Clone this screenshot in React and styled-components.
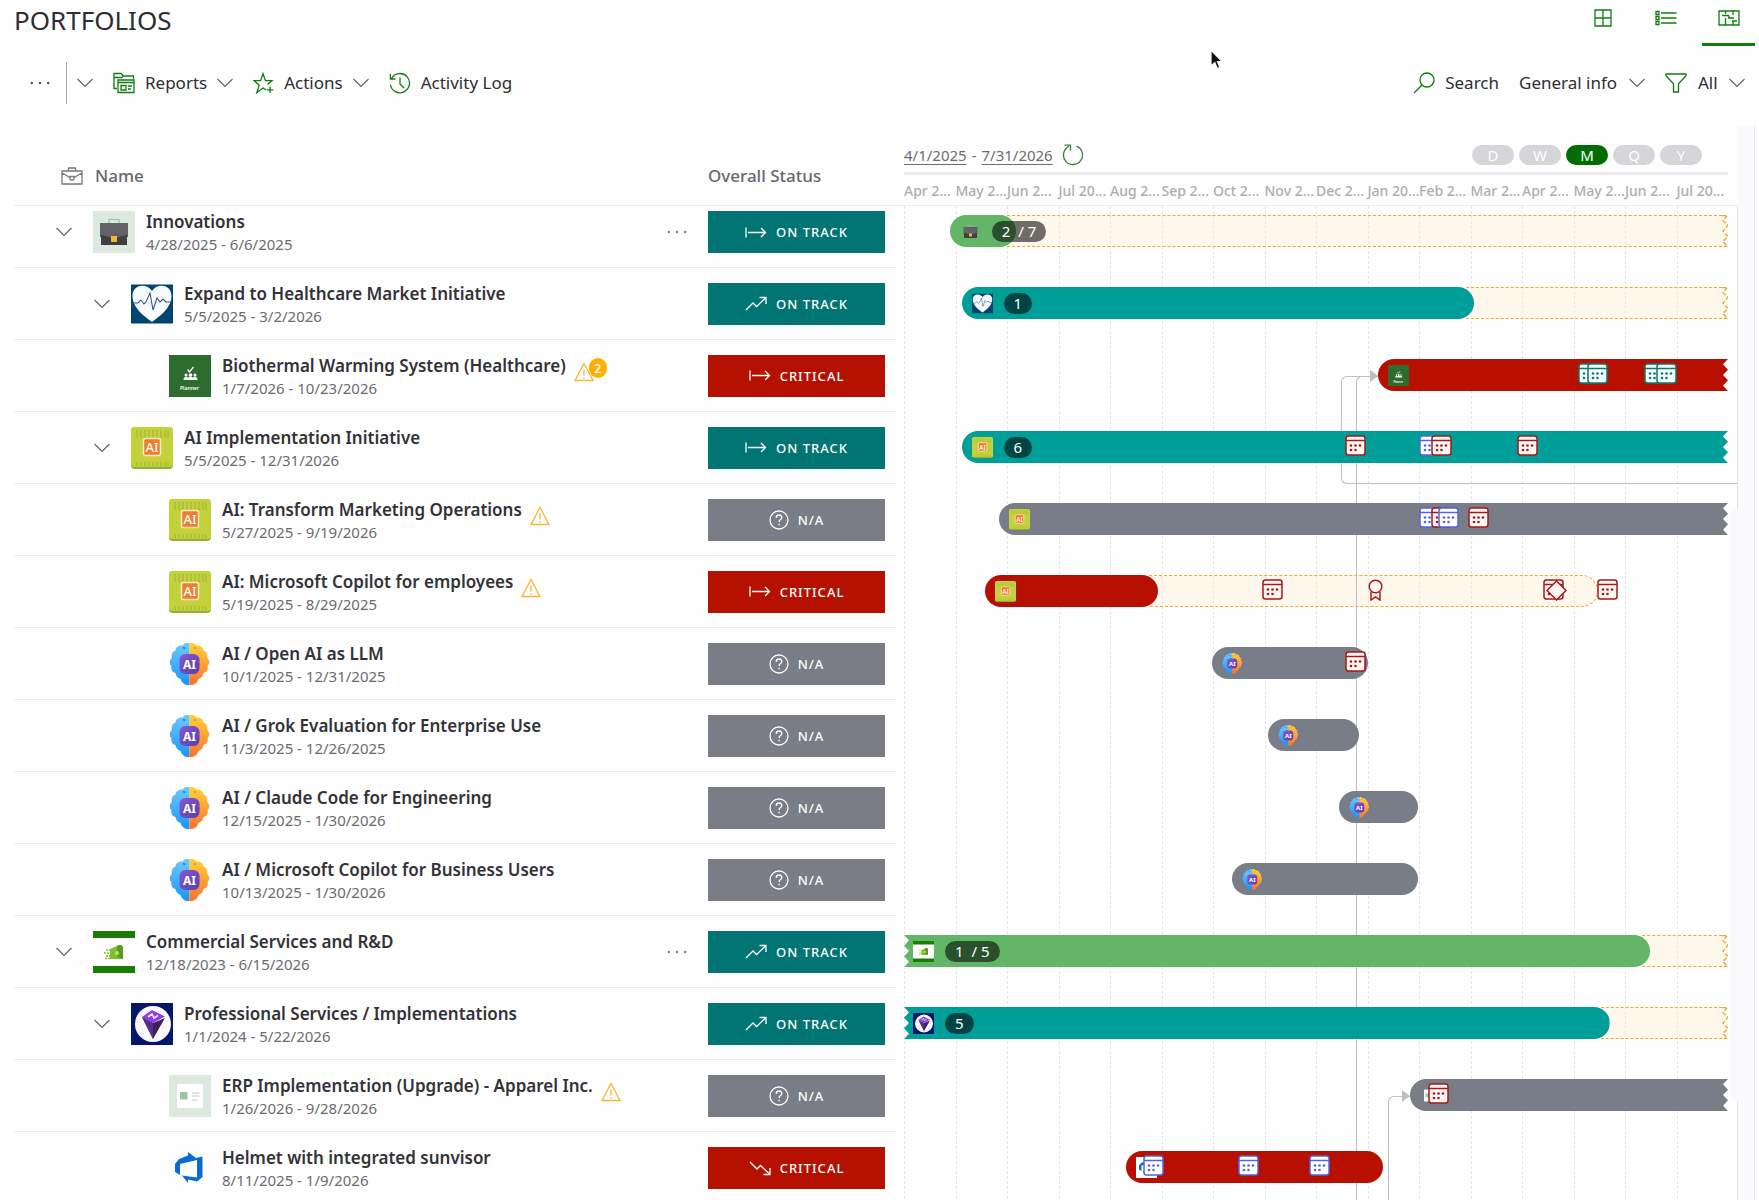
import React, { useId } from "react";
import styled, { createGlobalStyle, css } from "styled-components";

/* ---------- data ---------- */

const TOTAL_DAYS = 487; // 4/1/2025 – 7/31/2026
const pct = (day) => `${(day / TOTAL_DAYS) * 100}%`;

const MONTHS = [
  "Apr 2...", "May 2...", "Jun 2...", "Jul 20...", "Aug 2...", "Sep 2...", "Oct 2...", "Nov 2...",
  "Dec 2...", "Jan 20...", "Feb 2...", "Mar 2...", "Apr 2...", "May 2...", "Jun 2...", "Jul 20...",
];

const COLORS = { green: "#62b666", teal: "#009e98", red: "#b70f00", gray: "#797d87" };
const STATUS = {
  flat: { label: "ON TRACK", color: "#007574", icon: "flat" },
  up: { label: "ON TRACK", color: "#007574", icon: "up" },
  critical: { label: "CRITICAL", color: "#b51000", icon: "flat" },
  falling: { label: "CRITICAL", color: "#b51000", icon: "down" },
  na: { label: "N/A", color: "#7a7d86", icon: "help" },
};

const ROWS = [
  { level: 0, art: "case", name: "Innovations", dates: "4/28/2025 - 6/6/2025", status: "flat", open: true, more: true,
    bar: { from: 27, to: 66, color: "green", count: ["2", "/ 7"] }, plan: { to: 487, torn: true } },
  { level: 1, art: "heart", name: "Expand to Healthcare Market Initiative", dates: "5/5/2025 - 3/2/2026", status: "up", open: true,
    bar: { from: 34, to: 337, color: "teal", count: ["1"] }, plan: { to: 487, torn: true } },
  { level: 2, art: "planner", name: "Biothermal Warming System (Healthcare)", dates: "1/7/2026 - 10/23/2026", status: "critical", warn: 2,
    bar: { from: 280, to: 487, color: "red", tornRight: true },
    marks: [[405, "teal"], [410, "teal"], [444, "teal"], [451, "teal"]] },
  { level: 1, art: "chip", name: "AI Implementation Initiative", dates: "5/5/2025 - 12/31/2026", status: "flat", open: true,
    bar: { from: 34, to: 487, color: "teal", count: ["6"], tornRight: true },
    marks: [[267, "red"], [311, "blue"], [318, "red"], [369, "red"]] },
  { level: 2, art: "chip", name: "AI: Transform Marketing Operations", dates: "5/27/2025 - 9/19/2026", status: "na", warn: 1,
    bar: { from: 56, to: 487, color: "gray", tornRight: true },
    marks: [[311, "blue"], [318, "red"], [322, "blue"], [340, "red"]] },
  { level: 2, art: "chip", name: "AI: Microsoft Copilot for employees", dates: "5/19/2025 - 8/29/2025", status: "critical", warn: 1,
    bar: { from: 48, to: 150, color: "red" }, plan: { to: 410 },
    marks: [[218, "red"], [279, "red", "ribbon"], [384, "red"], [386, "red", "diamond"], [416, "red"]] },
  { level: 2, art: "brain", name: "AI / Open AI as LLM", dates: "10/1/2025 - 12/31/2025", status: "na",
    bar: { from: 182, to: 274, color: "gray" }, marks: [[267, "red"]] },
  { level: 2, art: "brain", name: "AI / Grok Evaluation for Enterprise Use", dates: "11/3/2025 - 12/26/2025", status: "na",
    bar: { from: 215, to: 269, color: "gray" } },
  { level: 2, art: "brain", name: "AI / Claude Code for Engineering", dates: "12/15/2025 - 1/30/2026", status: "na",
    bar: { from: 257, to: 304, color: "gray" } },
  { level: 2, art: "brain", name: "AI / Microsoft Copilot for Business Users", dates: "10/13/2025 - 1/30/2026", status: "na",
    bar: { from: 194, to: 304, color: "gray" } },
  { level: 0, art: "money", name: "Commercial Services and R&D", dates: "12/18/2023 - 6/15/2026", status: "up", open: true, more: true,
    bar: { from: 0, to: 441, color: "green", count: ["1", "/ 5"], tornLeft: true }, plan: { to: 487, torn: true } },
  { level: 1, art: "gem", name: "Professional Services / Implementations", dates: "1/1/2024 - 5/22/2026", status: "up", open: true,
    bar: { from: 0, to: 417, color: "teal", count: ["5"], tornLeft: true }, plan: { to: 487, torn: true } },
  { level: 2, art: "card", name: "ERP Implementation (Upgrade) - Apparel Inc.", dates: "1/26/2026 - 9/28/2026", status: "na", warn: 1,
    bar: { from: 299, to: 487, color: "gray", tornRight: true }, marks: [[316, "red"]] },
  { level: 2, art: "devops", name: "Helmet with integrated sunvisor", dates: "8/11/2025 - 1/9/2026", status: "falling",
    bar: { from: 131, to: 283, color: "red" },
    marks: [[148, "blue"], [204, "blue"], [246, "blue"]] },
];

/* ---------- global ---------- */

const Global = createGlobalStyle`
  *, *::before, *::after { box-sizing: border-box; }
  body { margin: 0; background: #fefefe; color: #2e2d33; font: 400 17px/24px "Noto Sans", "Open Sans", sans-serif; }
  button, select { font: inherit; color: inherit; background: none; border: 0; padding: 0; margin: 0; cursor: pointer; }
  svg { display: block; flex: none; }
`;

/* ---------- line icons ---------- */

const Line = ({ w, h = w, color = "#107c10", sw = 1.3, children }) => (
  <svg width={w} height={h} viewBox={`0 0 ${w} ${h}`} fill="none" stroke={color} strokeWidth={sw} aria-hidden="true">
    {children}
  </svg>
);

const Chevron = () => <Line w={16} h={10} color="#5d5c62" sw={1.1}><path d="M.5 1L8 8.500 15.500 1" /></Line>;
const Dots = ({ color = "#55545a" }) => (
  <svg width="20" height="4" viewBox="0 0 20 4" fill={color} aria-hidden="true">
    <circle cx="1.800" cy="2" r="1.300" /><circle cx="10" cy="2" r="1.300" /><circle cx="18.200" cy="2" r="1.300" />
  </svg>
);
const ReportsIcon = () => (
  <Line w={22}>
    <path d="M4 16.500H1V1.500h7l2.500 2.500H20.500V7M1 5.500h7.500l2-1.500" />
    <path d="M5 20.500V8h16v12.500zM5 10.500H21M8 13.500h5v4.500H8zM15 14h4M15 17h3" />
  </Line>
);
const StarIcon = () => (
  <Line w={21} h={22}>
    <path d="M13 18l-3-2-6.200 4.600 2.400-7.300L1 8.600h6.600L10 1.700l2.400 6.900H19l-4.500 4" />
    <path d="M17 14.500v6.500M13.800 17.800h6.500" />
  </Line>
);
const HistoryIcon = () => (
  <Line w={22}>
    <path d="M2.600 6.300A9.600 9.600 0 1 1 1.400 12.500M1.400 2v5h5M11 5.500V12l4 4" />
  </Line>
);
const SearchIcon = () => <Line w={22}><circle cx="14" cy="8" r="7" /><path d="M9 13l-8 8" /></Line>;
const FilterIcon = () => <Line w={22} h={20}><path d="M1 1h20v1.800l-7.500 8V19h-5v-8.200L1 2.800z" /></Line>;
const TilesIcon = () => <Line w={18}><path d="M1 1h16v16H1zM9 1v16M1 9h16" /></Line>;
const ListIcon = () => (
  <Line w={22} h={16}>
    <path d="M1 1.500h3v3H1zM1 6.500h3v3H1zM1 11.500h3v3H1zM6 3h15.500M6 8h15.500M6 13h15.500" />
  </Line>
);
const BoardIcon = () => (
  <Line w={22} h={16}>
    <path d="M1 1h20v14H1zM7.500 1v3M4 5.500h7M15 1v4M10 8h6M14 11h5M7.500 8v7M11 5.500v2.500M15 11v4" />
  </Line>
);
const BriefcaseIcon = () => (
  <Line w={22} h={18} color="#77757b">
    <path d="M1 4h20v13H1zM7.500 4V1h7v3M1 6l8 4.500M21 6l-8 4.500M9 9.500h4v2.500l-1 1h-2l-1-1z" />
  </Line>
);
const RefreshIcon = () => (
  <Line w={22} color="#2f8438"><path d="M14.500 2.200a9.500 9.500 0 1 1-7.500.2M2.500 1.200h6v5.500" /></Line>
);
const WarnIcon = () => (
  <Line w={20} color="#f5b731"><path d="M10 1.500L19 18.500H1z" /><path d="M10 7.500v6M10 15v1.500" /></Line>
);

const STATUS_ICONS = {
  flat: <path d="M1 1.500v10M3 6.500h17.500M16 2l4.500 4.500L16 11" />,
  up: <path d="M1 14l7-7 3.500 3.500L20.500 2M14.500 1.500H21V8" />,
  down: <path d="M1 2l7 7 3.500-3.500L20.500 14M14.500 14.500H21V8" />,
  help: (
    <>
      <circle cx="10" cy="10" r="9" />
      <path d="M7.200 8c0-4 5.600-3.800 5.600-.5 0 2-2.800 2.200-2.800 4.500M10 13.500V15.200" />
    </>
  ),
};
const STATUS_SIZE = { flat: [22, 13], up: [22, 16], down: [22, 16], help: [20, 20] };

/* ---------- project pictures ---------- */

function Art({ kind, size = 42, bare = false }) {
  const id = useId();
  const body = {
    case: (
      <>
        {!bare && <path fill="#dbe9de" d="M0 0h42v42H0z" />}
        <path fill="none" stroke="#a9b3ac" strokeWidth="1.200" d="M16 12V8.500h10V12" />
        <path fill="#636266" d="M7 12h28v14H7z" /><path fill="#3f3e42" d="M8 24l13 3 13-3v10H8z" />
        <path fill="#f0b63a" d="M18 25h6v6h-6z" />
      </>
    ),
    heart: (
      <>
        <path fill="#004471" d="M0 1.500h42v39H0z" />
        <path fill="#f7fafe" d="M21 39C16 35 1.500 26 1.500 13 1.500 1 16 0 21 8c5-8 19.500-7 19.500 5C40.500 26 26 35 21 39z" />
        <path fill="none" stroke="#315a7c" strokeWidth="1.100" d="M1 20h6l3-3 3 4 2-2 4-9 3 17 4-12 3 4 3-3 3 3h6" />
      </>
    ),
    planner: (
      <>
        <path fill="#2c6c2f" d="M0 0h42v42H0z" />
        <path fill="none" stroke="#fff" strokeWidth="1.300" d="M18.500 14.500l2 2.500 4-5" />
        <g fill="#fff">
          <circle cx="17" cy="20" r="1.500" /><circle cx="21.500" cy="20" r="1.800" /><circle cx="26" cy="20" r="1.500" />
          <path d="M14.500 25c0-4 4-4 4.500-2 1-2 4-2 5 0 .5-2 4.500-2 4.500 2z" />
        </g>
        <text x="20.500" y="35" fill="#fff" fontSize="5" fontWeight="600" textAnchor="middle">Planner</text>
      </>
    ),
    chip: (
      <>
        <rect y="1" width="42" height="41" rx="4" fill="#94ab2c" />
        <rect width="42" height="40" rx="3" fill="#c3d23a" />
        <path stroke="#a5b83a" strokeWidth="1.200" strokeDasharray="8 24" d="M6 3v38M10 3v38M14 3v38M18 3v38M22 3v38M26 3v38M30 3v38M34 3v38M37 3v38" />
        <rect x="12.500" y="11.500" width="17" height="17" rx="2" fill="#ef7d2b" stroke="#fbe7c4" strokeWidth="1.500" />
        <text x="21" y="25" fill="#fff" fontSize="13" fontWeight="500" textAnchor="middle">AI</text>
      </>
    ),
    brain: (
      <>
        <defs>
          <linearGradient id={`${id}l`} x1="0" y1="0" x2="0" y2="1"><stop offset="0" stopColor="#6ccbfb" /><stop offset="1" stopColor="#1a93f8" /></linearGradient>
          <linearGradient id={`${id}r`} x1="0" y1="0" x2="0" y2="1"><stop offset="0" stopColor="#ffd23a" /><stop offset="1" stopColor="#fb7030" /></linearGradient>
          <linearGradient id={`${id}c`} x1="0" y1="0" x2="1" y2="1"><stop offset="0" stopColor="#8a56cf" /><stop offset="1" stopColor="#5640ae" /></linearGradient>
        </defs>
        <path fill={`url(#${id}l)`} d="M20.500 0c-4-.5-6 1-7 2.500-4-.5-7 2-7 5-3 1-4.500 4-3.500 7-3 3-3 6.500-.5 8.500-1 3.500.5 6 4 7 .5 3 2 5 5 6 1.500 4.500 5 6.500 9 6z" />
        <path fill={`url(#${id}r)`} d="M20.500 0c4-.5 6 1 7 2.500 4-.5 7 2 7 5 3 1 4.500 4 3.500 7 3 3 3 6.500.5 8.500 1 3.500-.5 6-4 7-.5 3-2 5-5 6-1.500 4.500-5 6.500-9 6z" />
        <circle cx="15" cy="5" r="1.200" fill="#2a86d8" /><circle cx="26" cy="5" r="1.200" fill="#e79a1c" />
        <rect x="10.500" y="11" width="20" height="20" rx="6" fill={`url(#${id}c)`} />
        <text x="20.500" y="25.500" fill="#fff" fontSize="12" fontWeight="700" textAnchor="middle">AI</text>
      </>
    ),
    money: (
      <>
        <path fill="#fff" d="M0 0h42v42H0z" />
        <path fill="#1b7d04" d="M0 0h42v7H0zM0 35h42v7H0z" />
        <path fill="#7fbf2e" d="M17 18l7-3c2-2 5-1 6 1v12H17z" />
        <path fill="#5a9c22" d="M24 15c2-2 5-1 6 1v12l-6-2z" />
        <path stroke="#7fbf2e" strokeWidth="1.300" strokeDasharray="2 1" d="M13 19h5M11 22h6M13 25h5M12 27.500h6" />
        <circle cx="24" cy="22" r="2" fill="#b9e26b" />
      </>
    ),
    gem: (
      <>
        <path fill="#04176a" d="M0 0h42v42H0z" /><circle cx="22" cy="21" r="18" fill="#fbf9ff" />
        <path fill="#3d2260" d="M11 14l11 6 12-5-12 21z" /><path fill="#55308a" d="M11 14l11 6v16z" />
        <path fill="#8b3fe0" d="M11 14L21 7l13 6.500L22 20z" />
        <path fill="none" stroke="#f1e4ff" strokeWidth="1.600" d="M17 14l4-3 2 4 4-2.500" />
      </>
    ),
    card: (
      <>
        {!bare && <path fill="#dbe9de" d="M0 0h42v42H0z" />}
        <rect x="8" y="9" width="26" height="24" rx="1.500" fill="#fff" />
        <path fill="#9cc6a3" d="M11 17h7.500v7.500H11z" />
        <path stroke="#b9cfbd" strokeWidth="1.200" d="M23 18h7.500M23 21h7.500M23 25h5" />
      </>
    ),
    devops: (
      <>
        {bare && <path fill="#fff" d="M0 0h42v42H0z" />}
        <path fill="#0a6bd6" d="M6 17l4-5 9-3.500V5l8 6 6.500-1.500V30L28 34.500l-9-2V36l-6-7.500L28 30.500V13L11 17v11l-5-3z" />
      </>
    ),
  }[kind];
  return <svg width={size} height={size} viewBox="0 0 42 42" aria-hidden="true">{body}</svg>;
}

const MARK = {
  red: ["#a11a1c", "#fff6f1"],
  blue: ["#5066e0", "#ffffff"],
  teal: ["#14756c", "#f3fffd"],
};
function MarkIcon({ tone, shape = "calendar" }) {
  const [stroke, fill] = MARK[tone];
  return (
    <svg width="21" height="22" viewBox="0 0 21 22" stroke={stroke} fill={fill} strokeWidth="1.500" aria-hidden="true">
      {shape === "calendar" && (
        <>
          <rect x="1" y="1" width="19" height="19" rx="2.500" /><path d="M1 5.500h19" />
          <g fill={stroke} stroke="none">
            <circle cx="6" cy="10.500" r="1.300" /><circle cx="10.500" cy="10.500" r="1.300" /><circle cx="15" cy="10.500" r="1.300" />
            <circle cx="6" cy="15" r="1.300" /><circle cx="10.500" cy="15" r="1.300" />
          </g>
        </>
      )}
      {shape === "ribbon" && (
        <><path d="M6 13v8l4.500-3 4.500 3v-8" /><circle cx="10.500" cy="7.500" r="6.300" /></>
      )}
      {shape === "diamond" && <path d="M10.500 2L20 11.500 10.500 21 1 11.500z" />}
    </svg>
  );
}

/* ---------- page chrome ---------- */

const Page = styled.div`
  display: flex; flex-direction: column; height: 100vh; overflow: hidden; position: relative;
`;
const TopBar = styled.header`
  display: flex; justify-content: space-between; height: 46px; padding: 0 4px 0 14px; flex: none;
`;
const Title = styled.h1`
  margin: 0; font-size: 26px; line-height: 40px; font-weight: 400;
`;
const Views = styled.nav`display: flex; gap: 10px;`;
const ViewButton = styled.button`
  display: flex; align-items: center; justify-content: center; width: 53px; height: 46px; padding-bottom: 8px;
  border-bottom: 3px solid ${(p) => (p.$active ? "#107c10" : "transparent")};
`;
const Toolbar = styled.div`
  display: flex; align-items: center; justify-content: space-between; height: 42px; margin-top: 16px;
  padding: 0 14px 0 30px; flex: none;
`;
const ToolGroup = styled.div`display: flex; align-items: center; gap: 20px;`;
const Tool = styled.button`display: flex; align-items: center; gap: 10px; height: 42px;`;
const MoreMenu = styled.div`
  display: flex; align-items: center; gap: 10px;
  & > button:first-child { padding-right: 6px; }
`;
const Divider = styled.span`width: 1px; height: 42px; background: #a9a8ad;`;
const Picker = styled.label`
  display: flex; align-items: center; gap: 11px; height: 42px;
  & > svg:last-child { margin-left: -27px; pointer-events: none; }
`;
const Select = styled.select`appearance: none; outline: none; padding-right: 27px;`;
const Pointer = styled.svg`position: absolute; left: 1209px; top: 48px; pointer-events: none;`;

const Main = styled.main`
  display: grid; grid-template-columns: 882fr 859fr; margin-top: 22px; padding: 0 4px 0 14px; flex: 1; min-height: 0;
`;

/* ---------- project table ---------- */

const Table = styled.table`
  width: 100%; border-collapse: separate; border-spacing: 0; table-layout: fixed; align-self: start;
`;
const Th = styled.th`
  height: 80px; padding: 20px 0 0; text-align: left; font-weight: 500; color: #69676e; width: ${(p) => p.$w || "auto"};
  border-bottom: 1px solid #ebeaed;
`;
const HeadLabel = styled.div`display: flex; align-items: center; gap: 12px; padding-left: ${(p) => p.$pad || 0}px;`;
const Tr = styled.tr`
  & > td { height: 72px; padding: 0; border-bottom: 1px solid #ebeaed; }
  &:first-child > td { height: 62px; padding-bottom: 9px; }
`;
const NameCell = styled.div`
  display: flex; align-items: center; padding-left: ${(p) => 42 + 38 * p.$level}px; padding-right: 21px;
`;
const Toggle = styled.button`display: flex; align-items: center; width: 16px; height: 24px; margin-right: 21px;`;
const ToggleSpace = styled.span`width: 16px; margin-right: 21px;`;
const Labels = styled.div`flex: 1; min-width: 0; margin-left: 11px; padding-top: 2px;`;
const NameLine = styled.div`
  display: flex; align-items: center; gap: 8px; height: 22px; white-space: nowrap;
`;
const Name = styled.span`font-size: 17px; line-height: 22px; font-weight: 600; color: #333238;`;
const Dates = styled.div`font-size: 15px; line-height: 22px; color: #6d6b72;`;
const Warn = styled.span`display: flex; align-items: center; height: 22px; padding-top: 12px;`;
const WarnCount = styled.span`
  width: 18px; height: 20px; border-radius: 10px; margin: -8px 0 0 -5px; background: #ffb000; color: #fff;
  font-size: 13px; line-height: 20px; font-weight: 500; text-align: center;
`;
const Badge = styled.div`
  display: flex; align-items: center; justify-content: center; gap: 9px; height: 42px; margin-right: 11px;
  background: ${(p) => p.$color}; color: #fff; font-size: 13px; font-weight: 500; letter-spacing: 1px;
`;

/* ---------- timeline ---------- */

const ChartPanel = styled.section`display: flex; min-width: 0; min-height: 0;`;
const Timeline = styled.div`flex: 1; min-width: 0; display: flex; flex-direction: column;`;
const Rail = styled.div`
  width: 17px; background: #faf9fc; border-right: 1px solid #e9e8ec; display: flex; flex-direction: column; flex: none;
`;
const RailThumb = styled.div`
  width: 23px; height: 592px; margin: 383px 0 0 -7px; background: #faf9fc; z-index: 3;
`;
const ChartHead = styled.div`height: 80px; padding: 0 10px 0 8px; border-bottom: 1px solid #ebeaed; flex: none;`;
const RangeRow = styled.div`
  display: flex; align-items: center; justify-content: space-between; height: 49px; padding: 12px 26px 0 0;
  border-bottom: 3px solid #ebeaed;
`;
const Range = styled.div`display: flex; align-items: center; gap: 5px; font-size: 15px; color: #6d6b72; line-height: 22px;`;
const DateButton = styled.button`text-decoration: underline; text-underline-offset: 3px;`;
const RefreshButton = styled.button`margin-left: 4px;`;
const Scales = styled.div`display: flex; gap: 5px;`;
const Scale = styled.button`
  width: 42px; height: 20px; border-radius: 10px; font-size: 15px; line-height: 20px; color: #fff;
  background: ${(p) => (p.$active ? "#006d00" : "#d6d5d9")};
`;
const Months = styled.div`
  display: grid; grid-template-columns: repeat(16, minmax(0, 1fr)); font-size: 14px; font-weight: 500; line-height: 32px;
  color: #aeacb1; white-space: nowrap;
`;
const ChartBody = styled.div`
  flex: 1; min-height: 0; padding: 0 9px 0 8px; border-right: 1px solid #e4e3e8; overflow: hidden;
`;
const Canvas = styled.div`position: relative;`;
const GridLines = styled.div`
  position: absolute; inset: 0; display: grid; grid-template-columns: repeat(16, 1fr);
  & > i { border-left: 1px dashed #e7e5ea; }
`;
const Lane = styled.div`
  height: 72px; padding-bottom: 2px; display: flex; align-items: center;
  &:nth-child(2) { height: 62px; padding-bottom: 12px; }
`;
const Track = styled.div`position: relative; flex: 1; height: 32px;`;

const LEFT_TEETH = "0 100%, 5px 83.3%, 0 66.6%, 5px 50%, 0 33.3%, 5px 16.6%, 0 0";
const RIGHT_TEETH =
  "100% 0, calc(100% - 5px) 16.6%, 100% 33.3%, calc(100% - 5px) 50%, 100% 66.6%, calc(100% - 5px) 83.3%, 100% 100%";

const Bar = styled.div`
  position: absolute; top: 0; height: 32px; z-index: 1; display: flex; align-items: center; gap: 11px;
  padding-left: ${(p) => (p.$tornLeft ? 9 : 10)}px;
  background: ${(p) => COLORS[p.$color]};
  border-radius: ${(p) => (p.$tornLeft ? "0 16px 16px 0" : p.$tornRight ? "16px 0 0 16px" : "16px")};
  ${(p) => p.$tornLeft && css`clip-path: polygon(0 0, 100% 0, 100% 100%, ${LEFT_TEETH});`}
  ${(p) => p.$tornRight && css`clip-path: polygon(0 0, ${RIGHT_TEETH}, 0 100%);`}
`;
const Count = styled.span`
  display: flex; align-items: center; justify-content: center; gap: 8px; flex: none; height: 21px; padding: 0 10px;
  border-radius: 11px; background: rgba(0, 0, 0, 0.56); color: #fff; font-size: 15px; line-height: 21px; white-space: nowrap;
`;
const Plan = styled.div`position: absolute; top: 0; height: 32px; display: flex;`;
const PlanFill = styled.div`
  flex: 1; background: rgba(255, 236, 200, 0.32); border: 1px dashed #e9ab33; border-left: 0;
  ${(p) => (p.$torn ? "border-right: 0;" : "border-radius: 0 16px 16px 0;")}
`;
const Mark = styled.span`position: absolute; top: 4px; margin-left: -11px; z-index: 2;`;
const Link = styled.div`
  position: absolute; border: 0 solid #bfbec3; border-left-width: 1px; border-top-width: 1px; border-top-left-radius: 6px;
  ${(p) => p.$tail && css`border-bottom-width: 1px; border-bottom-left-radius: 6px;`}
`;
const ArrowHead = styled.i`
  position: absolute; margin: -6px 0 0 -8px; border: solid transparent; border-width: 6px 0 6px 8px; border-left-color: #bfbec3;
`;

/* y of the middle of a lane, from the top of the canvas */
const laneY = (i) => 26 + 72 * i;

/* A tail runs on from the foot of the connector to the right edge of the chart. */
function Connector({ from, to, row, height, tail }) {
  const head = `${((to - from) / (TOTAL_DAYS - from)) * 100}%`;
  const box = tail
    ? {
        width: `calc(${pct(TOTAL_DAYS - from)} + 9px)`,
        clipPath: `polygon(0 0, ${head} 0, ${head} 50%, 100% 50%, 100% 100%, 0 100%)`,
      }
    : { width: pct(to - from) };
  return (
    <>
      <Link $tail={tail} style={{ left: pct(from), top: laneY(row), height, ...box }} />
      <ArrowHead style={{ left: pct(to), top: laneY(row) }} />
    </>
  );
}

function ProjectRow({ row }) {
  const status = STATUS[row.status];
  const [w, h] = STATUS_SIZE[status.icon];
  return (
    <Tr>
      <td>
        <NameCell $level={row.level}>
          {row.open ? <Toggle aria-label={`Collapse ${row.name}`}><Chevron /></Toggle> : <ToggleSpace />}
          <Art kind={row.art} />
          <Labels>
            <NameLine>
              <Name>{row.name}</Name>
              {row.warn && (
                <Warn>
                  <WarnIcon />
                  {row.warn > 1 && <WarnCount>{row.warn}</WarnCount>}
                </Warn>
              )}
            </NameLine>
            <Dates>{row.dates}</Dates>
          </Labels>
          {row.more && <button aria-label={`More for ${row.name}`}><Dots color="#84828a" /></button>}
        </NameCell>
      </td>
      <td>
        <Badge $color={status.color}>
          <Line w={w} h={h} color="#fff">{STATUS_ICONS[status.icon]}</Line>
          {status.label}
        </Badge>
      </td>
    </Tr>
  );
}

function TimelineRow({ row }) {
  const { bar, plan, marks = [] } = row;
  return (
    <Lane>
      <Track>
        {plan && (
          <Plan style={{ left: pct(bar.to - 5), width: pct(plan.to - bar.to + 5) }}>
            <PlanFill $torn={plan.torn} />
            {plan.torn && (
              <svg width="6" height="32" viewBox="0 0 6 32" aria-hidden="true">
                <path fill="#ffecc8" fillOpacity=".32" d="M0 0h6L1 5.500l5 5L1 16l5 5.500-5 5L6 32H0z" />
                <path fill="none" stroke="#e9ab33" strokeWidth="1.500" strokeDasharray="4 2" d="M0 .5h5.500L1 5.500l5 5L1 16l5 5.500-5 5 4.500 5H0" />
              </svg>
            )}
          </Plan>
        )}
        <Bar $color={bar.color} $tornLeft={bar.tornLeft} $tornRight={bar.tornRight}
          style={{ left: pct(bar.from), width: pct(bar.to - bar.from) }}>
          <Art kind={row.art} size={21} bare />
          {bar.count && <Count>{bar.count.map((part) => <span key={part}>{part}</span>)}</Count>}
        </Bar>
        {marks.map(([day, tone, shape], i) => (
          <Mark key={i} style={{ left: pct(day) }}><MarkIcon tone={tone} shape={shape} /></Mark>
        ))}
      </Track>
    </Lane>
  );
}

export default function App() {
  return (
    <>
      <Global />
      <Page>
        <TopBar>
          <Title>PORTFOLIOS</Title>
          <Views aria-label="Views">
            <ViewButton aria-label="Tiles"><TilesIcon /></ViewButton>
            <ViewButton aria-label="List"><ListIcon /></ViewButton>
            <ViewButton aria-label="Timeline" aria-current="page" $active><BoardIcon /></ViewButton>
          </Views>
        </TopBar>
        <Toolbar>
          <ToolGroup>
            <MoreMenu>
              <Tool aria-label="More"><Dots /></Tool>
              <Divider />
              <Tool aria-label="Expand"><Chevron /></Tool>
            </MoreMenu>
            <Tool><ReportsIcon />Reports<Chevron /></Tool>
            <Tool><StarIcon />Actions<Chevron /></Tool>
            <Tool><HistoryIcon />Activity Log</Tool>
          </ToolGroup>
          <ToolGroup>
            <Tool><SearchIcon />Search</Tool>
            <Picker>
              <Select aria-label="Column view" defaultValue="General info"><option>General info</option></Select>
              <Chevron />
            </Picker>
            <Picker>
              <FilterIcon />
              <Select aria-label="Filter" defaultValue="All"><option>All</option></Select>
              <Chevron />
            </Picker>
          </ToolGroup>
        </Toolbar>

        <Main>
          <Table>
            <thead>
              <tr>
                <Th><HeadLabel $pad={47}><BriefcaseIcon />Name</HeadLabel></Th>
                <Th $w="188px"><HeadLabel>Overall Status</HeadLabel></Th>
              </tr>
            </thead>
            <tbody>{ROWS.map((row) => <ProjectRow key={row.name} row={row} />)}</tbody>
          </Table>

          <ChartPanel aria-label="Timeline">
            <Timeline>
              <ChartHead>
                <RangeRow>
                  <Range>
                    <DateButton>4/1/2025</DateButton>-<DateButton>7/31/2026</DateButton>
                    <RefreshButton aria-label="Refresh"><RefreshIcon /></RefreshButton>
                  </Range>
                  <Scales>
                    {["D", "W", "M", "Q", "Y"].map((s) => <Scale key={s} $active={s === "M"} aria-pressed={s === "M"}>{s}</Scale>)}
                  </Scales>
                </RangeRow>
                <Months>{MONTHS.map((m, i) => <span key={i}>{m}</span>)}</Months>
              </ChartHead>
              <ChartBody>
                <Canvas>
                  <GridLines>{MONTHS.map((m, i) => <i key={i} />)}</GridLines>
                  {ROWS.map((row) => <TimelineRow key={row.name} row={row} />)}
                  <Connector from={258} to={280} row={2} height={108} tail />
                  <Connector from={267} to={280} row={2} height={900} />
                  <Connector from={286} to={299} row={12} height={200} />
                </Canvas>
              </ChartBody>
            </Timeline>
            <Rail><RailThumb /></Rail>
          </ChartPanel>
        </Main>
        <Pointer width="15" height="23" viewBox="0 0 15 23" aria-hidden="true">
          <path d="M2 2v16l3.800-3.500L8.200 20.500l2.600-1.200-2.400-5.800H13z" fill="#111" stroke="#fff" strokeWidth="1.200" />
        </Pointer>
      </Page>
    </>
  );
}
